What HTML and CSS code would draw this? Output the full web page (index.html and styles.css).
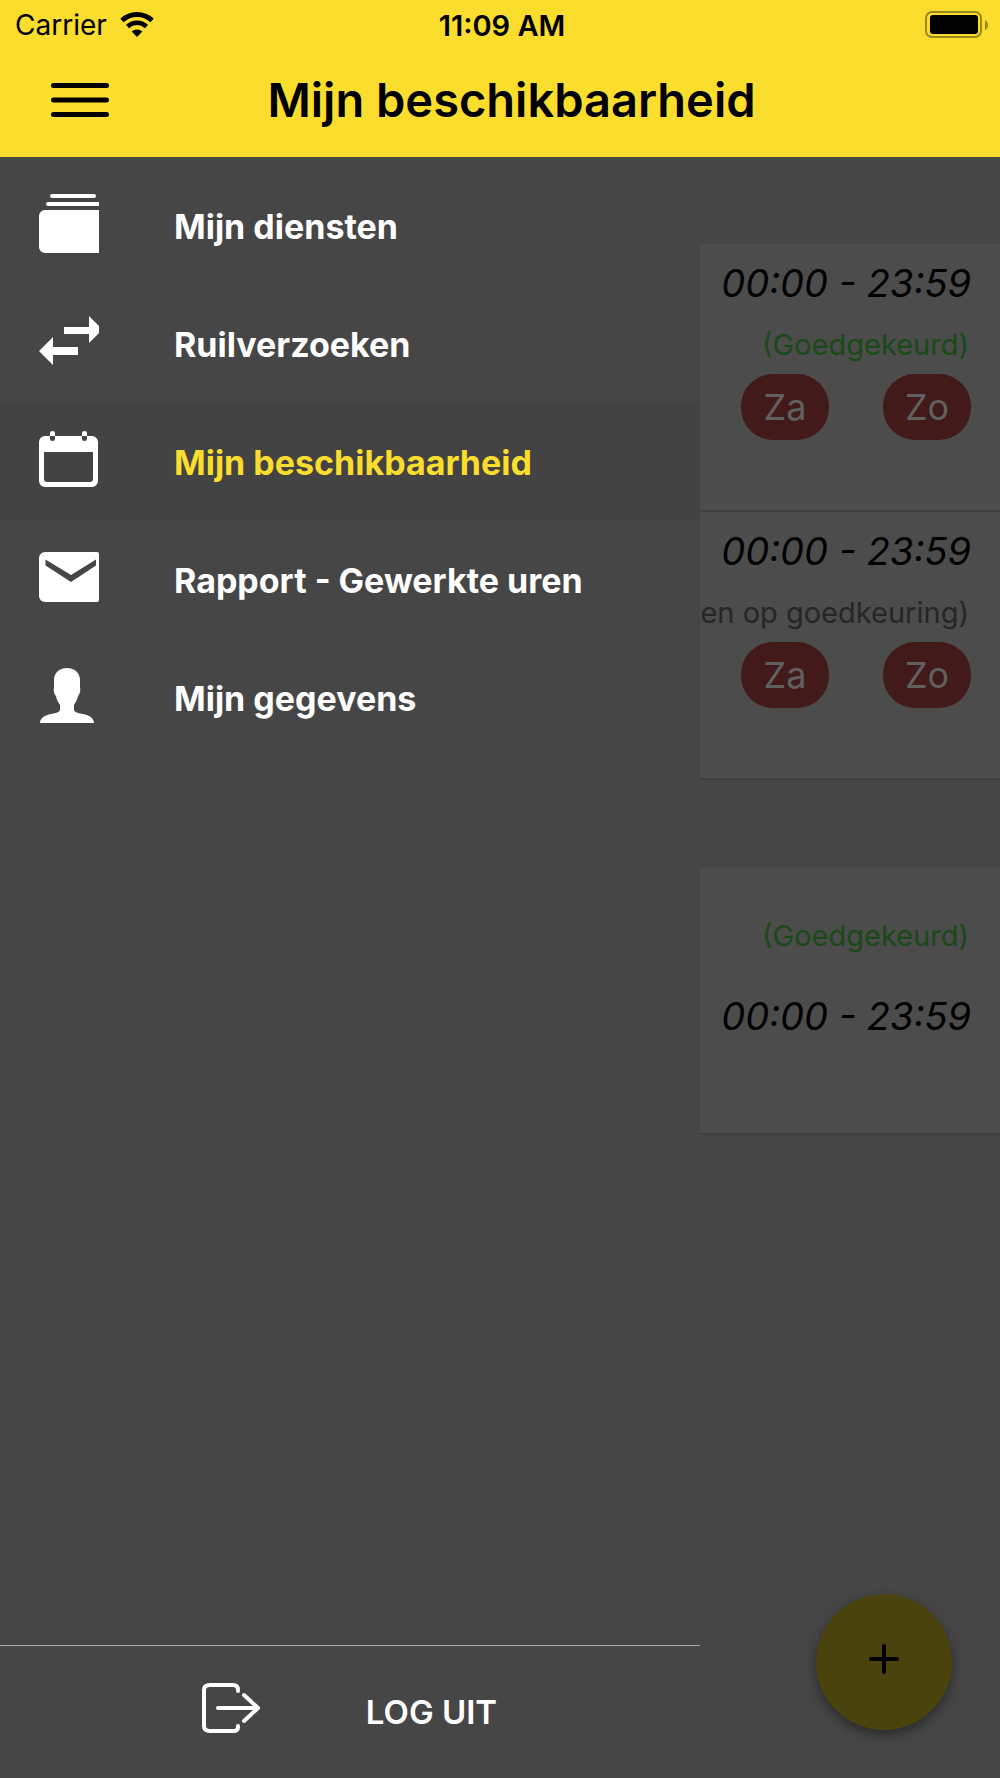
FILE: index.html
```html
<!DOCTYPE html>
<html lang="nl">
<head>
  <meta charset="UTF-8" />
  <meta name="viewport" content="width=device-width, initial-scale=1" />
  <title>Mijn beschikbaarheid</title>
  <link rel="stylesheet" href="styles.css">
</head>
<body>
  <header>
    <div class="status-bar">
      <div class="carrier">
        <span>Carrier</span>
        <svg width="34" height="26" viewBox="0 0 34 26" aria-hidden="true">
          <path d="M2 8.500a22 22 0 0 1 30 0" fill="none" stroke="#000" stroke-width="5" />
          <path d="M7.500 14.500a14 14 0 0 1 19 0" fill="none" stroke="#000" stroke-width="4.500" />
          <path d="M11.700 19.500a8 8 0 0 1 10.600 0L17 25z" />
        </svg>
      </div>
      <time class="clock">11:09 AM</time>
      <div class="battery">
        <svg width="64" height="28" viewBox="0 0 64 28" aria-hidden="true">
          <rect x="1" y="1" width="55" height="25" rx="6" fill="none" stroke="#9a881b" stroke-width="2" />
          <rect x="5" y="4" width="48" height="19" rx="3" />
          <path d="M60 9q3 1.500 3 5t-3 5z" fill="#9a881b" />
        </svg>
      </div>
    </div>
    <div class="title-bar">
      <button class="menu-button" type="button" aria-label="Menu">
        <svg width="58" height="36" viewBox="0 0 58 36" aria-hidden="true">
          <path d="M2.500 3.500h53M2.500 18h53M2.500 32.500h53" stroke="#000" stroke-width="5" stroke-linecap="round" />
        </svg>
      </button>
      <h1>Mijn beschikbaarheid</h1>
    </div>
  </header>

  <main>
    <section class="shifts" aria-label="Beschikbaarheid">
      <div class="shift-group">
        <article class="shift-card">
          <p class="shift-time">00:00 - 23:59</p>
          <p class="shift-status approved">(Goedgekeurd)</p>
          <div class="shift-days"><span class="day">Za</span><span class="day">Zo</span></div>
        </article>
        <article class="shift-card">
          <p class="shift-time">00:00 - 23:59</p>
          <p class="shift-status">(Wachten op goedkeuring)</p>
          <div class="shift-days"><span class="day">Za</span><span class="day">Zo</span></div>
        </article>
      </div>
      <div class="shift-group">
        <article class="shift-card single">
          <p class="shift-status approved">(Goedgekeurd)</p>
          <p class="shift-time">00:00 - 23:59</p>
        </article>
      </div>
    </section>

    <aside class="drawer">
      <nav aria-label="Hoofdmenu">
        <a href="#diensten">
          <svg width="60" height="60" viewBox="0 0 60 60" aria-hidden="true">
            <path d="M13 0h42a2 2 0 0 1 0 4H13a2 2 0 0 1 0-4zM9 8h51v4H9a2 2 0 0 1 0-4zM6 16h54v43H6a6 6 0 0 1-6-6V22a6 6 0 0 1 6-6z" />
          </svg>
          <span>Mijn diensten</span>
        </a>
        <a href="#ruilverzoeken">
          <svg width="60" height="60" viewBox="0 0 60 60" aria-hidden="true">
            <path d="M25 15h25V4l10 10v7L50 31V22H25zM0 39l14-14v10h25v8H14v10z" />
          </svg>
          <span>Ruilverzoeken</span>
        </a>
        <a href="#beschikbaarheid" class="active" aria-current="page">
          <svg width="60" height="60" viewBox="0 0 60 60" aria-hidden="true">
            <path fill-rule="evenodd" d="M6 6h5v3q0 2 2.500 2T16 9V6h27v3q0 2 2.500 2T48 9V6h5a6 6 0 0 1 6 6v39a6 6 0 0 1-6 6H6a6 6 0 0 1-6-6V12a6 6 0 0 1 6-6zM5 22v27q0 3 3 3h43q3 0 3-3V22z" />
            <path d="M11 6V3q0-2 2.500-2T16 3v3zM43 6V3q0-2 2.500-2T48 3v3z" />
          </svg>
          <span>Mijn beschikbaarheid</span>
        </a>
        <a href="#rapport">
          <svg width="60" height="60" viewBox="0 0 60 60" aria-hidden="true">
            <path fill-rule="evenodd" d="M6 4h52q2 0 2 2v46q0 2-2 2H6a6 6 0 0 1-6-6V10a6 6 0 0 1 6-6zM6.500 11.500v6L32 34l25-16.500v-6L32 27z" />
          </svg>
          <span>Rapport - Gewerkte uren</span>
        </a>
        <a href="#gegevens">
          <svg width="60" height="60" viewBox="0 0 60 60" aria-hidden="true">
            <path d="M28 2c8 0 13 5 13 12v7c1 5-1 8-2 9-1 5-3 7-4 9v5c1 3 5 3 9 4 6 1 11 4 11 9H1c0-5 5-8 11-9 4-1 8-1 9-4v-5c-1-2-3-4-4-9-1-1-3-4-2-9v-7C15 7 20 2 28 2z" />
          </svg>
          <span>Mijn gegevens</span>
        </a>
      </nav>
      <button class="logout" type="button">
        <svg width="60" height="60" viewBox="0 0 60 60" aria-hidden="true">
          <path d="M37 11V10q0-5-5-5H9Q3 5 3 10v36q0 5 6 5h23q5 0 5-4v-1M17 28h40M43 15l14 13-14 13" fill="none" stroke="#fff" stroke-width="4" stroke-linecap="round" stroke-linejoin="round" />
        </svg>
        <span>LOG UIT</span>
      </button>
    </aside>

    <button class="add-button" type="button" aria-label="Toevoegen">
      <svg width="30" height="30" viewBox="0 0 30 30" aria-hidden="true">
        <path d="M15 2v26M2 15h26" stroke="#000" stroke-width="4" stroke-linecap="round" />
      </svg>
    </button>
  </main>
</body>
</html>
```
FILE: styles.css
```css
/* Reset & base */
*, *::before, *::after {
  box-sizing: border-box;
}
body {
  font-family: Inter, 'Liberation Sans', sans-serif;
  background: #464646;
  color: #000;
  margin: 0;
  min-height: 100vh;
  display: flex;
  flex-direction: column;
}
h1, p {
  margin: 0;
}
button {
  font-family: inherit;
  border: 0;
  padding: 0;
  cursor: pointer;
}
svg {
  display: block;
  flex-shrink: 0;
}

/* Header */
header {
  background: #fbde2d;
  padding-bottom: 13px;
}
.status-bar {
  display: grid;
  grid-template-columns: 1fr auto 1fr;
  align-items: center;
  height: 50px;
  padding: 0 11px 0 15px;
  font-size: 28px;
}
.carrier {
  display: flex;
  align-items: center;
  gap: 13px;
}
.clock {
  font-size: 29px;
  font-weight: 600;
}
.battery {
  justify-self: end;
}
.title-bar {
  display: grid;
  grid-template-columns: 1fr auto 1fr;
  align-items: center;
  height: 94px;
  padding: 6px 28px 0 51px;
}
.menu-button {
  justify-self: start;
  background: none;
}
h1 {
  font-size: 47px;
  line-height: 64px;
  font-weight: 600;
}

/* Content behind the drawer */
main {
  position: relative;
  flex-grow: 1;
}
.shift-group {
  padding-top: 87px;
}
.shift-card {
  display: flex;
  flex-direction: column;
  align-items: flex-end;
  height: 268px;
  padding: 15px 29px 0;
  background: #4c4c4c;
  border-bottom: 2px solid #404040;
}
.shift-time {
  font-size: 38px;
  line-height: 48px;
  font-style: italic;
}
.shift-status {
  margin-top: 18px;
  padding-right: 2px;
  font-size: 29px;
  line-height: 40px;
  color: #262626;
}
.shift-status.approved {
  color: #1a4a17;
}
.shift-days {
  display: flex;
  gap: 54px;
  margin-top: 9px;
}
.day {
  width: 88px;
  border-radius: 32px;
  background: #431a1a;
  color: #606060;
  font-size: 36px;
  line-height: 66px;
  text-align: center;
}
.shift-card.single {
  justify-content: center;
  gap: 36px;
  padding-top: 0;
  padding-bottom: 44px;
}
.single .shift-status {
  margin-top: 0;
}

/* Drawer */
.drawer {
  position: absolute;
  top: 0;
  bottom: 0;
  left: 0;
  width: 70%;
  display: flex;
  flex-direction: column;
  justify-content: space-between;
  padding-top: 10px;
  background: #464646;
  color: #fff;
}
nav a {
  display: flex;
  align-items: center;
  gap: 75px;
  height: 118px;
  padding: 0 39px;
  color: #fff;
  font-size: 34px;
  font-weight: 700;
  text-decoration: none;
}
nav a.active {
  background: #434343;
}
nav a.active span {
  color: #fbde2d;
}
.drawer svg {
  margin-bottom: 4px;
  fill: #fff;
}
.logout {
  display: flex;
  align-items: center;
  justify-content: center;
  gap: 105px;
  height: 133px;
  padding-right: 2px;
  border-top: 1px solid #aaa;
  background: none;
  color: #fff;
  font-size: 33px;
  font-weight: 600;
}

.add-button {
  position: absolute;
  right: 48px;
  bottom: 48px;
  display: flex;
  align-items: center;
  justify-content: center;
  width: 136px;
  height: 136px;
  padding-bottom: 6px;
  border-radius: 50%;
  background: #4b430d;
  box-shadow: 0 5px 12px rgba(0, 0, 0, 0.4);
}
```
